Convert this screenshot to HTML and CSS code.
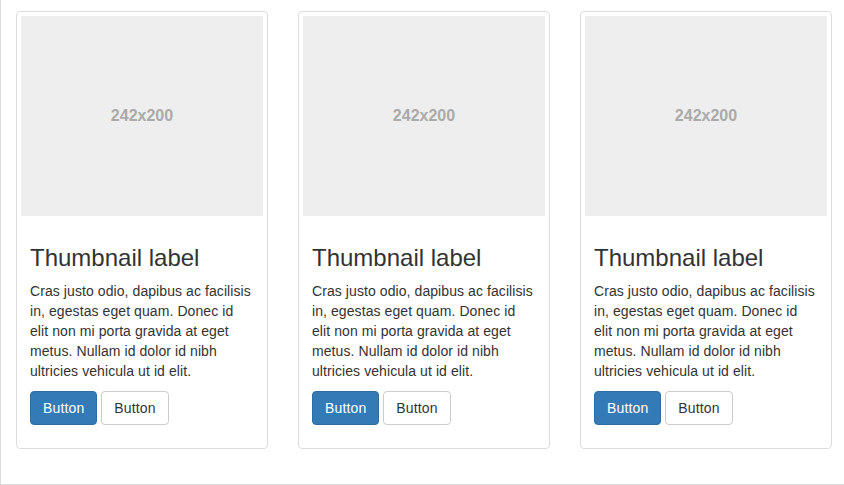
FILE: index.html
```html
<!DOCTYPE html>
<html>
<head>
<meta charset="utf-8">
<link rel="stylesheet" href="styles.css">
</head>
<body>
<div class="frame">
  <div class="row">
    <div class="thumbnail">
      <div class="placeholder">242x200</div>
      <div class="caption">
        <h3>Thumbnail label</h3>
        <p class="text">Cras justo odio, dapibus ac facilisis in, egestas eget quam. Donec id elit non mi porta gravida at eget metus. Nullam id dolor id nibh ultricies vehicula ut id elit.</p>
        <p><a class="btn btn-primary">Button</a> <a class="btn btn-default">Button</a></p>
      </div>
    </div>
    <div class="thumbnail">
      <div class="placeholder">242x200</div>
      <div class="caption">
        <h3>Thumbnail label</h3>
        <p class="text">Cras justo odio, dapibus ac facilisis in, egestas eget quam. Donec id elit non mi porta gravida at eget metus. Nullam id dolor id nibh ultricies vehicula ut id elit.</p>
        <p><a class="btn btn-primary">Button</a> <a class="btn btn-default">Button</a></p>
      </div>
    </div>
    <div class="thumbnail">
      <div class="placeholder">242x200</div>
      <div class="caption">
        <h3>Thumbnail label</h3>
        <p class="text">Cras justo odio, dapibus ac facilisis in, egestas eget quam. Donec id elit non mi porta gravida at eget metus. Nullam id dolor id nibh ultricies vehicula ut id elit.</p>
        <p><a class="btn btn-primary">Button</a> <a class="btn btn-default">Button</a></p>
      </div>
    </div>
  </div>
</div>
</body>
</html>
```
FILE: styles.css
```css
html, body {
  margin: 0;
  padding: 0;
  overflow: hidden;
  background: #fff;
}
body {
  font-family: "Liberation Sans", Arial, sans-serif;
  font-size: 14px;
  line-height: 20px;
  color: #333;
}
.frame {
  width: 816px;
  padding: 11px 15px 15px 15px;
  border-left: 1px solid #ddd;
  border-bottom: 1px solid #ddd;
}
.row {
  display: grid;
  grid-template-columns: 252px 252px 252px;
  column-gap: 30px;
}
.thumbnail {
  box-sizing: border-box;
  padding: 4px;
  border: 1px solid #ddd;
  border-radius: 4px;
  background: #fff;
  margin-bottom: 20px;
}
.placeholder {
  height: 200px;
  background: #eee;
  color: #aaa;
  font-weight: bold;
  font-size: 16px;
  display: flex;
  align-items: center;
  justify-content: center;
}
.caption {
  padding: 9px;
}
.caption h3 {
  font-size: 24px;
  font-weight: 500;
  line-height: 1.1;
  margin: 20px 0 10px 0;
}
.caption p {
  margin: 0 0 10px 0;
}
.caption .text {
  letter-spacing: 0.08px;
}
.btn {
  display: inline-block;
  padding: 6px 12px;
  font-size: 14px;
  line-height: 20px;
  letter-spacing: 0.15px;
  border: 1px solid transparent;
  border-radius: 4px;
  vertical-align: middle;
  cursor: pointer;
}
.btn-primary {
  color: #fff;
  background: #337ab7;
  border-color: #2e6da4;
}
.btn-default {
  color: #333;
  background: #fff;
  border-color: #ccc;
}
```
